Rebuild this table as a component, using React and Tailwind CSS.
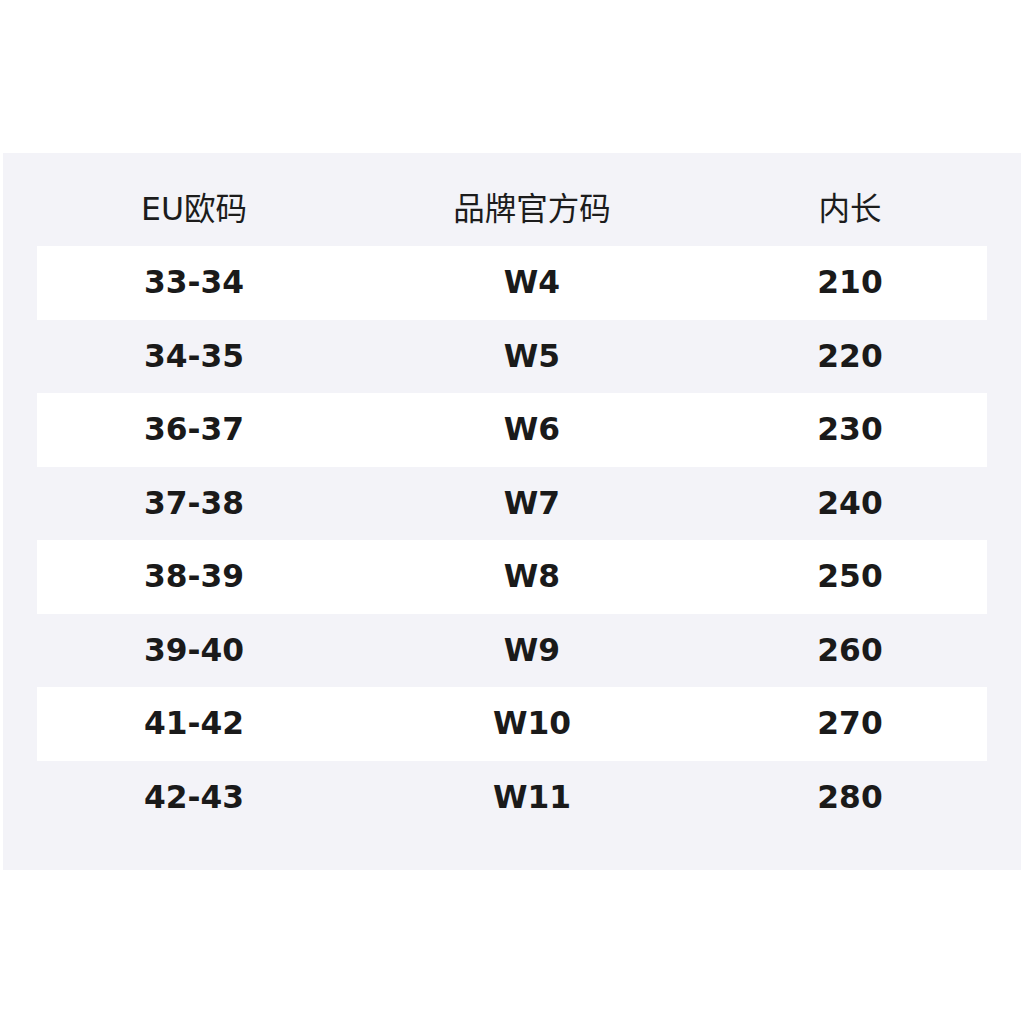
export default function App() {
  const rows = [
    ["33-34", "W4", "210"],
    ["34-35", "W5", "220"],
    ["36-37", "W6", "230"],
    ["37-38", "W7", "240"],
    ["38-39", "W8", "250"],
    ["39-40", "W9", "260"],
    ["41-42", "W10", "270"],
    ["42-43", "W11", "280"],
  ];
  const font = { fontFamily: '"DejaVu Sans", "Noto Sans CJK SC", sans-serif' };
  return (
    <div className="w-[1024px] h-[1024px] bg-white pt-[153px] pl-[3px]" style={font}>
      <div className="w-[1018px] h-[717px] bg-[#f3f3f8] px-[34px]">
        <div className="grid grid-cols-[314px_362px_274px] h-[93px] items-center text-[31.5px] text-[#1c1c1c] pt-[20px]">
          <div className="text-center">EU欧码</div>
          <div className="text-center">品牌官方码</div>
          <div className="text-center">内长</div>
        </div>
        {rows.map((r, i) => (
          <div
            key={i}
            className={`grid grid-cols-[314px_362px_274px] h-[73.5px] items-center text-[31.3px] font-bold text-[#1a1a1a] ${i % 2 === 0 ? "bg-white" : ""}`}
          >
            <div className="text-center">{r[0]}</div>
            <div className="text-center">{r[1]}</div>
            <div className="text-center">{r[2]}</div>
          </div>
        ))}
      </div>
    </div>
  );
}
